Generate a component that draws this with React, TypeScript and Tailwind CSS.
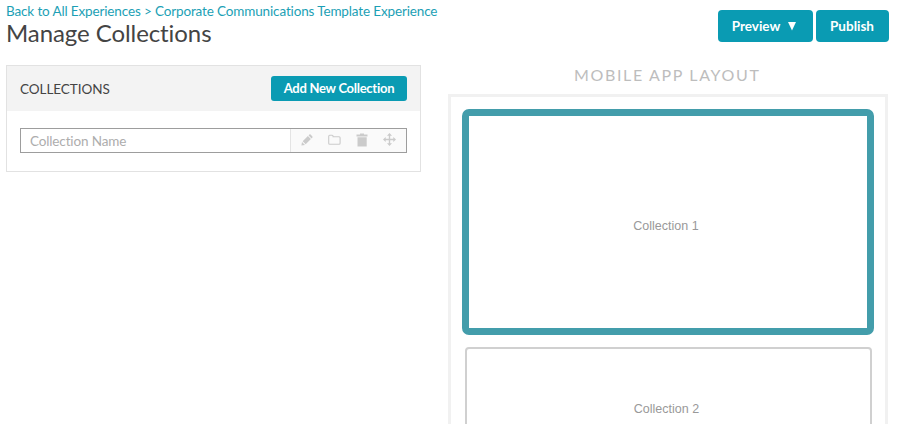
import React from "react";

function Pencil() {
  return (
    <svg width="12" height="12" viewBox="0 0 12 12" fill="currentColor">
      <path d="M.4 11.600 1 8l3 3zM1.700 7.300l5.200-5.200 3 3-5.200 5.200zM7.600 1.400l.8-.8q.6-.5 1.200 0l1.800 1.800q.5.6 0 1.200l-.8.8z" />
    </svg>
  );
}

function Folder() {
  return (
    <svg width="13" height="12" viewBox="0 0 13 12" fill="none" stroke="currentColor" strokeWidth="1.1">
      <path d="M.7 2.300q0-1 1-1h2.400q1 0 1 1v.4h6q1 0 1 1v5.600q0 1-1 1H1.700q-1 0-1-1z" />
    </svg>
  );
}

function Trash() {
  return (
    <svg width="12" height="14" viewBox="0 0 12 14" fill="currentColor">
      <path d="M.5 1.500h3.500V.5h4v1h3.500v1.900H.5zM1.500 4.200h9.200v9.300H1.500z" />
    </svg>
  );
}

function Move() {
  return (
    <svg width="13" height="13" viewBox="0 0 13 13" fill="currentColor">
      <path d="M6.500 0 9 2.700H7.200v3.100h3.100V4L13 6.500 10.300 9V7.200H7.200v3.100H9L6.500 13 4 10.300h1.800V7.200H2.700V9L0 6.500 2.700 4v1.800h3.100V2.700H4z" />
    </svg>
  );
}

export default function App() {
  return (
    <div className="h-[426px] w-[900px] overflow-hidden bg-white font-[Lato,sans-serif]">
      <div className="h-[424px] overflow-hidden pl-1.5">
        <header className="flex h-[65px] justify-between pr-[11px]">
          <div className="whitespace-nowrap">
            <nav className="mt-[3px] text-[13.5px] leading-4 tracking-[-0.14px] text-[#1c9fb5]">
              <a>Back to All Experiences</a> &gt; <a>Corporate Communications Template Experience</a>
            </nav>
            <h1 className="text-[24px] leading-[28px] tracking-[-0.08px] text-[#444]">Manage Collections</h1>
          </div>
          <div className="mt-2.5 flex gap-[3px] text-[13.5px] font-bold text-white">
            <button className="flex h-8 w-[95px] items-center justify-center gap-2 rounded-[4px] bg-[#0a9bb3] pr-[3px]">
              Preview
              <svg width="8" height="9" viewBox="0 0 8 9" fill="currentColor"><path d="M0 0h8L4 8.500z" /></svg>
            </button>
            <button className="h-8 w-[73px] rounded-[4px] bg-[#0a9bb3] pr-px">Publish</button>
          </div>
        </header>
        <main className="flex items-start">
          <section className="h-[107px] w-[415px] border border-[#e2e2e2]">
            <div className="flex h-[45px] items-center justify-between bg-[#f3f3f3] px-[13px]">
              <h2 className="pt-0.5 text-[13.5px] tracking-[-0.05px] text-[#444]">COLLECTIONS</h2>
              <button className="h-[25px] w-[136px] rounded-[3px] bg-[#0a9bb3] text-[13px] leading-[25px] font-bold tracking-[-0.27px] whitespace-nowrap text-white">
                Add New Collection
              </button>
            </div>
            <div className="px-[13px] pt-[17px]">
              <div className="flex h-[25px] border border-[#9d9d9d]">
                <div className="flex-1 pl-[9px] text-[13.5px] leading-[24px] tracking-[-0.14px] text-[#adadad]">Collection Name</div>
                <div className="flex w-[116px] items-center border-l border-[#e4e4e4] bg-[#fafafa] pb-0.5 text-[#cbcbcb]">
                  <span className="ml-[10px] w-[27px]"><Pencil /></span>
                  <span className="w-[28px]"><Folder /></span>
                  <span className="w-[27px]"><Trash /></span>
                  <span><Move /></span>
                </div>
              </div>
            </div>
          </section>
          <section className="ml-[27px] w-[440px]">
            <h2 className="h-[29px] pl-[126px] text-[16px] leading-[20px] tracking-[1.65px] whitespace-nowrap text-[#bdbdbd]">
              MOBILE APP LAYOUT
            </h2>
            <div className="h-[360px] border-[3px] border-[#f1f1f1] px-[11px] pt-3 font-['Liberation_Sans',sans-serif] text-[12.5px] text-[#999]">
              <div className="flex h-[226px] items-center justify-center rounded-[7px] border-[7px] border-[#439dab] pt-2 pr-1">
                Collection 1
              </div>
              <div className="mr-[2px] ml-[3px] mt-3 h-[180px] rounded-[4px] border-2 border-[#d0d0d0] pt-[52px] pr-[4px] text-center leading-4">
                Collection 2
              </div>
            </div>
          </section>
        </main>
      </div>
    </div>
  );
}
